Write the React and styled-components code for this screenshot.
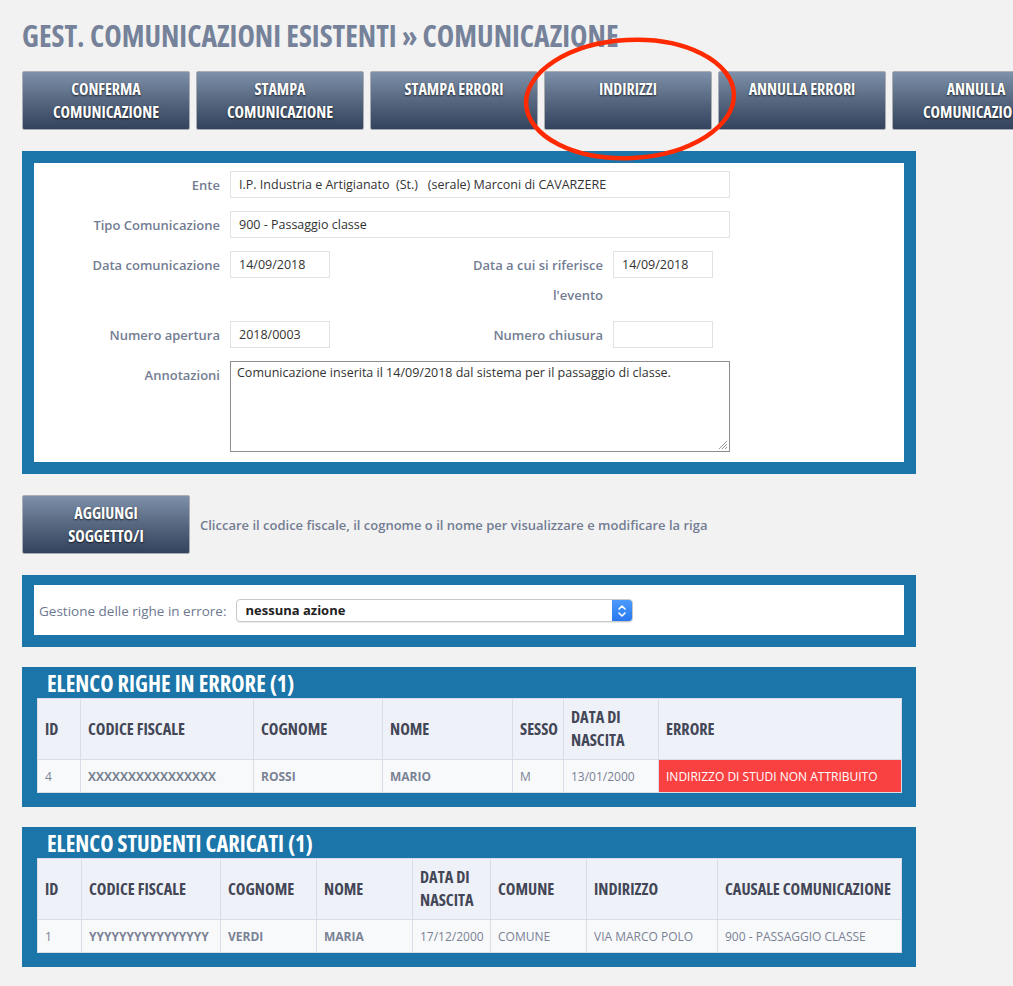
import React from "react"
import styled, { createGlobalStyle } from "styled-components"

const GlobalStyle = createGlobalStyle`
  body {
    margin: 0;
    background: #f2f2f2;
    font-family: "Open Sans", "Liberation Sans", sans-serif;
  }
`

const condensed = `
  font-family: "Open Sans", "DejaVu Sans Condensed", sans-serif;
  font-stretch: 75%;
  font-weight: 700;
`

const Page = styled.div`
  position: relative;
  width: 1013px;
  height: 986px;
  overflow: hidden;
  padding: 0 0 0 22px;
  box-sizing: border-box;
`

const Title = styled.h1`
  ${condensed};
  margin: 0;
  padding-top: 17px;
  height: 52px;
  box-sizing: border-box;
  font-size: 29.5px;
  line-height: 38px;
  color: #75829a;
  white-space: nowrap;
`

const Toolbar = styled.div`
  display: flex;
  gap: 6px;
  margin-top: 19px;
`

const ActionButton = styled.button`
  ${condensed};
  flex: 0 0 168px;
  height: 59px;
  padding: 6px 4px 0;
  border: 1px solid #a9acb2;
  border-radius: 2px;
  background: linear-gradient(to bottom, #7f90aa 0%, #56677f 50%, #33435e 100%);
  color: #fff;
  font-size: 16px;
  line-height: 23px;
  text-align: center;
  display: flex;
  flex-direction: column;
  justify-content: flex-start;
  align-items: center;
  text-shadow: 0 1px 2px rgba(0, 0, 0, 0.7);
  white-space: nowrap;
  cursor: pointer;
`

const Highlight = styled.svg`
  position: absolute;
  left: 518px;
  top: 32px;
  pointer-events: none;
`

const Panel = styled.section`
  width: 894px;
  box-sizing: border-box;
  background: #1b75a8;
  margin-top: ${p => p.$top}px;
  padding: ${p => p.$pad};
`

const WhiteBox = styled.div`
  background: #fff;
  padding: ${p => p.$pad};
`

const FormRow = styled.div`
  display: flex;
  align-items: flex-start;
  gap: 10px;
  & + & {
    margin-top: 10px;
  }
`

const Label = styled.label`
  flex: 0 0 ${p => p.$w}px;
  text-align: right;
  font-size: 13px;
  font-weight: 600;
  line-height: 30px;
  color: #737d93;
`

const Field = styled.div`
  box-sizing: border-box;
  width: ${p => p.$w}px;
  height: ${p => p.$h || 27}px;
  margin-top: 1px;
  padding: ${p => (p.$area ? "2px 6px" : "0 8px")};
  border: 1px solid ${p => (p.$area ? "#8d8d8d" : "#e2e2e2")};
  font-size: 12.5px;
  line-height: ${p => (p.$area ? "18px" : "25px")};
  color: #333;
  white-space: pre;
  position: relative;
`

const Grip = styled.svg`
  position: absolute;
  right: 1px;
  bottom: 1px;
`

const AddRow = styled.div`
  display: flex;
  align-items: center;
  gap: 10px;
  margin-top: 21px;
`

const Hint = styled.span`
  font-size: 13px;
  font-weight: 600;
  color: #737d93;
`

const SelectRow = styled.div`
  display: flex;
  align-items: center;
  gap: 10px;
`

const SelectLabel = styled.span`
  font-size: 13.5px;
  color: #6d7891;
`

const SelectBox = styled.div`
  width: 397px;
  height: 23px;
  box-sizing: border-box;
  display: flex;
  border: 1px solid #c8c8c8;
  border-radius: 4px;
  overflow: hidden;
  box-shadow: 0 1px 1px rgba(0, 0, 0, 0.08);
`

const SelectValue = styled.div`
  flex: 1;
  padding-left: 8px;
  font-size: 13px;
  font-weight: 700;
  line-height: 21px;
  color: #222;
`

const Stepper = styled.div`
  width: 20px;
  background: linear-gradient(to bottom, #4a9bfb, #2a78f0);
  display: flex;
  align-items: center;
  justify-content: center;
`

const TableTitle = styled.h2`
  ${condensed};
  margin: 0;
  padding-left: 10px;
  height: 31px;
  font-size: 22.5px;
  line-height: 33px;
  color: #fff;
  white-space: nowrap;
`

const Table = styled.table`
  width: 864px;
  border-collapse: collapse;
  table-layout: fixed;
  background: #f8f9fb;
`

const Col = styled.col`
  width: ${p => p.$w}px;
`

const Th = styled.th`
  ${condensed};
  height: 61px;
  box-sizing: border-box;
  padding: 0 7px;
  text-align: left;
  font-size: 16.3px;
  line-height: 23px;
  color: #434656;
  background: #eef1f8;
  border: 1px solid #d9dde8;
  white-space: nowrap;
`

const Td = styled.td`
  height: 33px;
  box-sizing: border-box;
  padding: 0 7px;
  font-size: 12px;
  font-weight: ${p => (p.$bold ? 700 : 400)};
  color: ${p => (p.$error ? "#fff" : "#7a8294")};
  background: ${p => (p.$error ? "#fa4141" : "transparent")};
  border: 1px solid #d9dde8;
  white-space: nowrap;
  overflow: hidden;
`

const DataTable = ({ title, cols, rows }) => (
  <Panel $top={20} $pad="0 15px 14px">
    <TableTitle>{title}</TableTitle>
    <Table>
      <colgroup>
        {cols.map(c => (
          <Col key={c.label} $w={c.w} />
        ))}
      </colgroup>
      <thead>
        <tr>
          {cols.map(c => (
            <Th key={c.label}>
              {c.label.split("\n").map((l, i) => (
                <div key={i}>{l}</div>
              ))}
            </Th>
          ))}
        </tr>
      </thead>
      <tbody>
        {rows.map((r, ri) => (
          <tr key={ri}>
            {r.map((cell, ci) => (
              <Td key={ci} $bold={cols[ci].bold} $error={cols[ci].error}>
                {cell}
              </Td>
            ))}
          </tr>
        ))}
      </tbody>
    </Table>
  </Panel>
)

const errorCols = [
  { label: "ID", w: 43 },
  { label: "CODICE FISCALE", w: 173, bold: true },
  { label: "COGNOME", w: 129, bold: true },
  { label: "NOME", w: 130, bold: true },
  { label: "SESSO", w: 51 },
  { label: "DATA DI\nNASCITA", w: 95 },
  { label: "ERRORE", w: 243, error: true },
]

const studentCols = [
  { label: "ID", w: 44 },
  { label: "CODICE FISCALE", w: 139, bold: true },
  { label: "COGNOME", w: 96, bold: true },
  { label: "NOME", w: 96, bold: true },
  { label: "DATA DI\nNASCITA", w: 78 },
  { label: "COMUNE", w: 96 },
  { label: "INDIRIZZO", w: 131 },
  { label: "CAUSALE COMUNICAZIONE", w: 184 },
]

const buttons = [
  ["CONFERMA", "COMUNICAZIONE"],
  ["STAMPA", "COMUNICAZIONE"],
  ["STAMPA ERRORI"],
  ["INDIRIZZI"],
  ["ANNULLA ERRORI"],
  ["ANNULLA", "COMUNICAZIONE"],
]

export default function App() {
  return (
    <Page>
      <GlobalStyle />
      <Title>GEST. COMUNICAZIONI ESISTENTI » COMUNICAZIONE</Title>
      <Toolbar>
        {buttons.map((b, i) => (
          <ActionButton key={i}>
            {b.map(l => (
              <span key={l}>{l}</span>
            ))}
          </ActionButton>
        ))}
      </Toolbar>

      <Panel $top={21} $pad="12px">
        <WhiteBox $pad="7px 0 10px">
          <FormRow>
            <Label $w={186}>Ente</Label>
            <Field $w={500}>I.P. Industria e Artigianato  (St.)   (serale) Marconi di CAVARZERE</Field>
          </FormRow>
          <FormRow>
            <Label $w={186}>Tipo Comunicazione</Label>
            <Field $w={500}>900 - Passaggio classe</Field>
          </FormRow>
          <FormRow>
            <Label $w={186}>Data comunicazione</Label>
            <Field $w={100}>14/09/2018</Field>
            <Label $w={263}>
              Data a cui si riferisce
              <br />
              l'evento
            </Label>
            <Field $w={100}>14/09/2018</Field>
          </FormRow>
          <FormRow>
            <Label $w={186}>Numero apertura</Label>
            <Field $w={100}>2018/0003</Field>
            <Label $w={263}>Numero chiusura</Label>
            <Field $w={100} />
          </FormRow>
          <FormRow>
            <Label $w={186}>Annotazioni</Label>
            <Field $w={500} $h={91} $area>
              Comunicazione inserita il 14/09/2018 dal sistema per il passaggio di classe.
              <Grip width="11" height="11" viewBox="0 0 11 11">
                <path d="M10 2 L2 10 M10 5 L5 10 M10 8 L8 10" stroke="#999" strokeWidth="1" />
              </Grip>
            </Field>
          </FormRow>
        </WhiteBox>
      </Panel>

      <AddRow>
        <ActionButton>
          <span>AGGIUNGI</span>
          <span>SOGGETTO/I</span>
        </ActionButton>
        <Hint>Cliccare il codice fiscale, il cognome o il nome per visualizzare e modificare la riga</Hint>
      </AddRow>

      <Panel $top={21} $pad="10px 12px 12px">
        <WhiteBox $pad="14px 5px 13px">
          <SelectRow>
            <SelectLabel>Gestione delle righe in errore:</SelectLabel>
            <SelectBox>
              <SelectValue>nessuna azione</SelectValue>
              <Stepper>
                <svg width="10" height="16" viewBox="0 0 10 16">
                  <path d="M2 6 L5 3 L8 6 M2 10 L5 13 L8 10" fill="none" stroke="#fff" strokeWidth="1.6" strokeLinecap="round" strokeLinejoin="round" />
                </svg>
              </Stepper>
            </SelectBox>
          </SelectRow>
        </WhiteBox>
      </Panel>

      <DataTable
        title="ELENCO RIGHE IN ERRORE (1)"
        cols={errorCols}
        rows={[["4", "XXXXXXXXXXXXXXXX", "ROSSI", "MARIO", "M", "13/01/2000", "INDIRIZZO DI STUDI NON ATTRIBUITO"]]}
      />
      <DataTable
        title="ELENCO STUDENTI CARICATI (1)"
        cols={studentCols}
        rows={[["1", "YYYYYYYYYYYYYYYY", "VERDI", "MARIA", "17/12/2000", "COMUNE", "VIA MARCO POLO", "900 - PASSAGGIO CLASSE"]]}
      />

      <Highlight width="230" height="140" viewBox="0 0 230 140">
        <ellipse cx="112" cy="67" rx="104" ry="59" fill="none" stroke="#ff2a00" strokeWidth="4.5" transform="rotate(-3 112 67)" />
      </Highlight>
    </Page>
  )
}
